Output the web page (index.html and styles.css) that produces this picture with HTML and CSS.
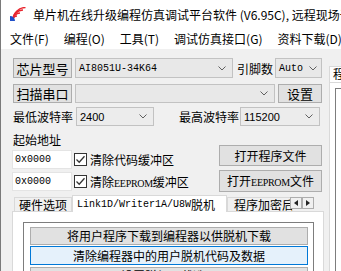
FILE: index.html
```html
<!DOCTYPE html>
<html lang="zh-CN">
<head>
  <meta charset="UTF-8">
  <meta name="viewport" content="width=device-width, initial-scale=1.0">
  <title>单片机在线升级编程仿真调试平台软件</title>
  <link rel="stylesheet" href="styles.css">
</head>
<body>
  <div class="window">
    <div class="titlebar">
      <svg class="app-icon" width="16" height="14" viewBox="0 0 16 14">
        <path d="M3 13 A4 4 0 0 1 7 9" fill="none" stroke="#e8262f" stroke-width="1.6"/>
        <path d="M3 13 A7 7 0 0 1 10 6" fill="none" stroke="#e8262f" stroke-width="1.6"/>
        <path d="M3 13 A10 10 0 0 1 13 3" fill="none" stroke="#e8262f" stroke-width="1.6"/>
        <path d="M3 13 A12.5 12.5 0 0 1 15.5 0.5" fill="none" stroke="#e8262f" stroke-width="1.4"/>
        <path d="M0 14 L0 9 A5 5 0 0 1 5 14 Z" fill="#1f4fc8"/>
      </svg>
      <span class="title">单片机在线升级编程仿真调试平台软件 (V6.95C), 远程现场调试</span>
    </div>

    <div class="menubar">
      <span>文件(F)</span>
      <span>编程(O)</span>
      <span>工具(T)</span>
      <span>调试仿真接口(G)</span>
      <span>资料下载(D)</span>
    </div>

    <div class="client">
      <div class="main">
        <div class="row row-chip">
          <button class="btn btn-label">芯片型号</button>
          <div class="combo mono chip-combo">AI8051U-34K64
            <svg class="chev" width="8" height="5" viewBox="0 0 8 5"><polyline points="0.5,0.5 4,4 7.5,0.5" fill="none" stroke="#606060"/></svg>
          </div>
          <span class="lbl pins-lbl">引脚数</span>
          <div class="combo mono auto-combo">Auto
            <svg class="chev" width="8" height="5" viewBox="0 0 8 5"><polyline points="0.5,0.5 4,4 7.5,0.5" fill="none" stroke="#606060"/></svg>
          </div>
        </div>

        <div class="row row-port">
          <button class="btn btn-label">扫描串口</button>
          <div class="combo port-combo">
            <svg class="chev" width="8" height="5" viewBox="0 0 8 5"><polyline points="0.5,0.5 4,4 7.5,0.5" fill="none" stroke="#606060"/></svg>
          </div>
          <button class="btn btn-set">设置</button>
        </div>

        <div class="row row-baud">
          <span class="lbl baud-lbl">最低波特率</span>
          <div class="combo num baud-min">2400
            <svg class="chev" width="8" height="5" viewBox="0 0 8 5"><polyline points="0.5,0.5 4,4 7.5,0.5" fill="none" stroke="#606060"/></svg>
          </div>
          <span class="lbl baud-lbl baud-max-lbl">最高波特率</span>
          <div class="combo num baud-max">115200
            <svg class="chev" width="8" height="5" viewBox="0 0 8 5"><polyline points="0.5,0.5 4,4 7.5,0.5" fill="none" stroke="#606060"/></svg>
          </div>
        </div>

        <div class="addr-block">
          <div class="addr-left">
            <div class="addr-title">起始地址</div>
            <div class="addr-row">
              <div class="input mono">0x0000</div>
              <svg class="check" width="13" height="13" viewBox="0 0 13 13"><rect x="0.5" y="0.5" width="12" height="12" fill="#fff" stroke="#333"/><polyline points="2.5,6.5 5.2,9.2 10.5,3.2" fill="none" stroke="#333" stroke-width="1.3"/></svg>
              <span class="check-text">清除代码缓冲区</span>
            </div>
            <div class="addr-row">
              <div class="input mono">0x0000</div>
              <svg class="check" width="13" height="13" viewBox="0 0 13 13"><rect x="0.5" y="0.5" width="12" height="12" fill="#fff" stroke="#333"/><polyline points="2.5,6.5 5.2,9.2 10.5,3.2" fill="none" stroke="#333" stroke-width="1.3"/></svg>
              <span class="check-text">清除<span class="narrow">EEPROM</span>缓冲区</span>
            </div>
          </div>
          <div class="addr-right">
            <button class="btn btn-file">打开程序文件</button>
            <button class="btn btn-file btn-eeprom">打开<span class="narrow">EEPROM</span>文件</button>
          </div>
        </div>

        <div class="tabs">
          <div class="tab">硬件选项</div>
          <div class="tab active mono">Link1D/Writer1A/U8W<span class="cjk">脱机</span></div>
          <div class="tab tab-cut">程序加密后</div>
          <div class="tab-arrows">
            <span class="arrow"><svg width="4" height="6" viewBox="0 0 4 6"><polygon points="4,0 0,3 4,6" fill="#222"/></svg></span>
            <span class="arrow"><svg width="4" height="6" viewBox="0 0 4 6"><polygon points="0,0 4,3 0,6" fill="#222"/></svg></span>
          </div>
        </div>

        <div class="tab-page">
          <div class="group">
            <button class="btn wide">将用户程序下载到编程器以供脱机下载</button>
            <button class="btn wide hot">清除编程器中的用户脱机代码及数据</button>
            <button class="btn wide">设置脱机下载选项</button>
          </div>
        </div>
      </div>

      <div class="side">
        <div class="side-tab">程序</div>
        <div class="side-page">
          <div class="side-box"></div>
        </div>
      </div>
    </div>
  </div>
</body>
</html>
```

FILE: styles.css
```css
* {
  box-sizing: border-box;
}

body {
  margin: 0;
  width: 341px;
  height: 271px;
  overflow: hidden;
  background: #f0f0f0;
  font-family: "Noto Sans CJK SC", "Microsoft YaHei", sans-serif;
  font-size: 12px;
  color: #000;
}

.window {
  height: 271px;
  border-left: 1px solid #7a7a7a;
  background: #f0f0f0;
  overflow: hidden;
}

.titlebar {
  height: 28px;
  display: flex;
  align-items: center;
  padding-left: 9px;
  background: #fff;
  white-space: nowrap;
  overflow: hidden;
}

.app-icon {
  flex: none;
  margin-right: 7px;
}

.title {
  font-size: 12px;
}

.menubar {
  height: 21px;
  display: flex;
  align-items: center;
  gap: 15px;
  padding-left: 9px;
  background: #fff;
  white-space: nowrap;
}

.client {
  display: flex;
  padding-top: 9px;
}

.main {
  width: 323px;
  flex: none;
  padding-left: 11px;
}

.row {
  display: flex;
  align-items: center;
}

.row-chip {
  height: 20px;
}

.row-port {
  height: 19px;
  margin-top: 6px;
}

.row-baud {
  height: 19px;
  margin-top: 4px;
}

.btn {
  height: 100%;
  padding: 0;
  border: 1px solid #adadad;
  background: #e1e1e1;
  font-family: inherit;
  font-size: 12px;
  color: #000;
  line-height: 1;
}

.btn-label {
  width: 59px;
  margin-left: 1px;
  font-size: 13px;
}

.combo {
  height: 100%;
  display: flex;
  align-items: center;
  padding: 0 6px 0 3px;
  border: 1px solid #c2c2c2;
  background: #e8e8e8;
  white-space: nowrap;
}

.mono {
  font-family: "Liberation Mono", "DejaVu Sans Mono", monospace;
  font-size: 10px;
}

.num {
  font-family: "Liberation Sans", Arial, sans-serif;
  font-size: 11px;
}

.cjk {
  font-family: "Noto Sans CJK SC", sans-serif;
  font-size: 12px;
}

.narrow {
  font-family: "Liberation Serif", serif;
  font-size: 10px;
  letter-spacing: -0.3px;
}

.chev {
  flex: none;
  margin-left: auto;
}

.chip-combo {
  width: 158px;
  margin-left: 3px;
}

.lbl {
  white-space: nowrap;
}

.pins-lbl {
  width: 38px;
  margin-left: 4px;
  font-size: 12px;
}

.auto-combo {
  width: 47px;
  padding-right: 4px;
}

.port-combo {
  width: 200px;
  margin-left: 3px;
}

.btn-set {
  width: 44px;
  margin-left: 3px;
  font-size: 13px;
}

.baud-lbl {
  width: 64px;
  padding-left: 1px;
}

.baud-min {
  width: 78px;
  background: #ececec;
}

.baud-max-lbl {
  margin-left: 24px;
}

.baud-max {
  width: 80px;
  margin-left: -2px;
  background: #ececec;
}

.addr-block {
  display: flex;
  margin-top: 6px;
}

.addr-left {
  width: 207px;
}

.addr-title {
  height: 16px;
  line-height: 16px;
  padding-left: 1px;
}

.addr-row {
  height: 19px;
  display: flex;
  align-items: center;
  margin-top: 2px;
  white-space: nowrap;
}

.addr-row + .addr-row {
  margin-top: 3px;
}

.input {
  width: 60px;
  height: 100%;
  display: flex;
  align-items: center;
  padding-left: 2px;
  background: #fff;
  border: 1px solid #e4e4e4;
}

.check {
  flex: none;
  margin-left: 2px;
  margin-right: 3px;
}

.check-text {
  font-size: 12px;
}

.addr-right {
  display: flex;
  flex-direction: column;
  padding-top: 13px;
}

.btn-file {
  width: 103px;
  height: 21px;
  font-size: 12px;
}

.btn-eeprom {
  height: 22px;
  margin-top: 4px;
}

.tabs {
  display: flex;
  align-items: flex-end;
  height: 16px;
  margin-top: 3px;
  white-space: nowrap;
}

.tab {
  height: 14px;
  display: flex;
  align-items: center;
  padding: 0 3px;
  border: 1px solid #d9d9d9;
  border-bottom: none;
  background: #f0f0f0;
  font-size: 12px;
}

.tab:first-child {
  width: 58px;
  margin-left: 2px;
  justify-content: center;
}

.tab.active {
  height: 17px;
  width: 155px;
  background: #fff;
  font-size: 10px;
  padding-left: 4px;
  margin-bottom: -1px;
  position: relative;
}

.tab-cut {
  width: 66px;
  overflow: hidden;
  padding-left: 6px;
}

.tab-arrows {
  display: flex;
  align-self: flex-start;
  margin-top: 2px;
  margin-left: -3px;
}

.arrow {
  width: 12px;
  height: 12px;
  display: flex;
  align-items: center;
  justify-content: center;
  border: 1px solid #adadad;
  background: #f0f0f0;
}

.tab-page {
  height: 70px;
  padding: 10px 9px 0 10px;
  background: #fff;
  border: 1px solid #d9d9d9;
}

.group {
  height: 60px;
  padding: 4px 5px 0 6px;
  border: 1px solid #7d7d7d;
  border-bottom: none;
  display: flex;
  flex-direction: column;
}

.wide {
  width: 100%;
  height: 18px;
  flex: none;
}

.wide + .wide {
  margin-top: 1px;
}

.wide.hot {
  height: 19px;
  background: #e5f1fb;
  border-color: #0078d7;
}

.wide:last-child {
  margin-top: 2px;
}

.side {
  flex: 1;
  padding-left: 5px;
  padding-top: 8px;
  overflow: hidden;
}

.side-tab {
  width: 30px;
  height: 16px;
  padding-left: 3px;
  border: 1px solid #d9d9d9;
  border-bottom: none;
  background: #fff;
  white-space: nowrap;
  overflow: hidden;
  font-size: 12px;
  line-height: 14px;
}

.side-page {
  height: 200px;
  padding: 5px 0 0 5px;
  background: #fff;
  border: 1px solid #d9d9d9;
  border-right: none;
}

.side-box {
  height: 190px;
  border: 1px solid #7d7d7d;
  border-right: none;
}
```
